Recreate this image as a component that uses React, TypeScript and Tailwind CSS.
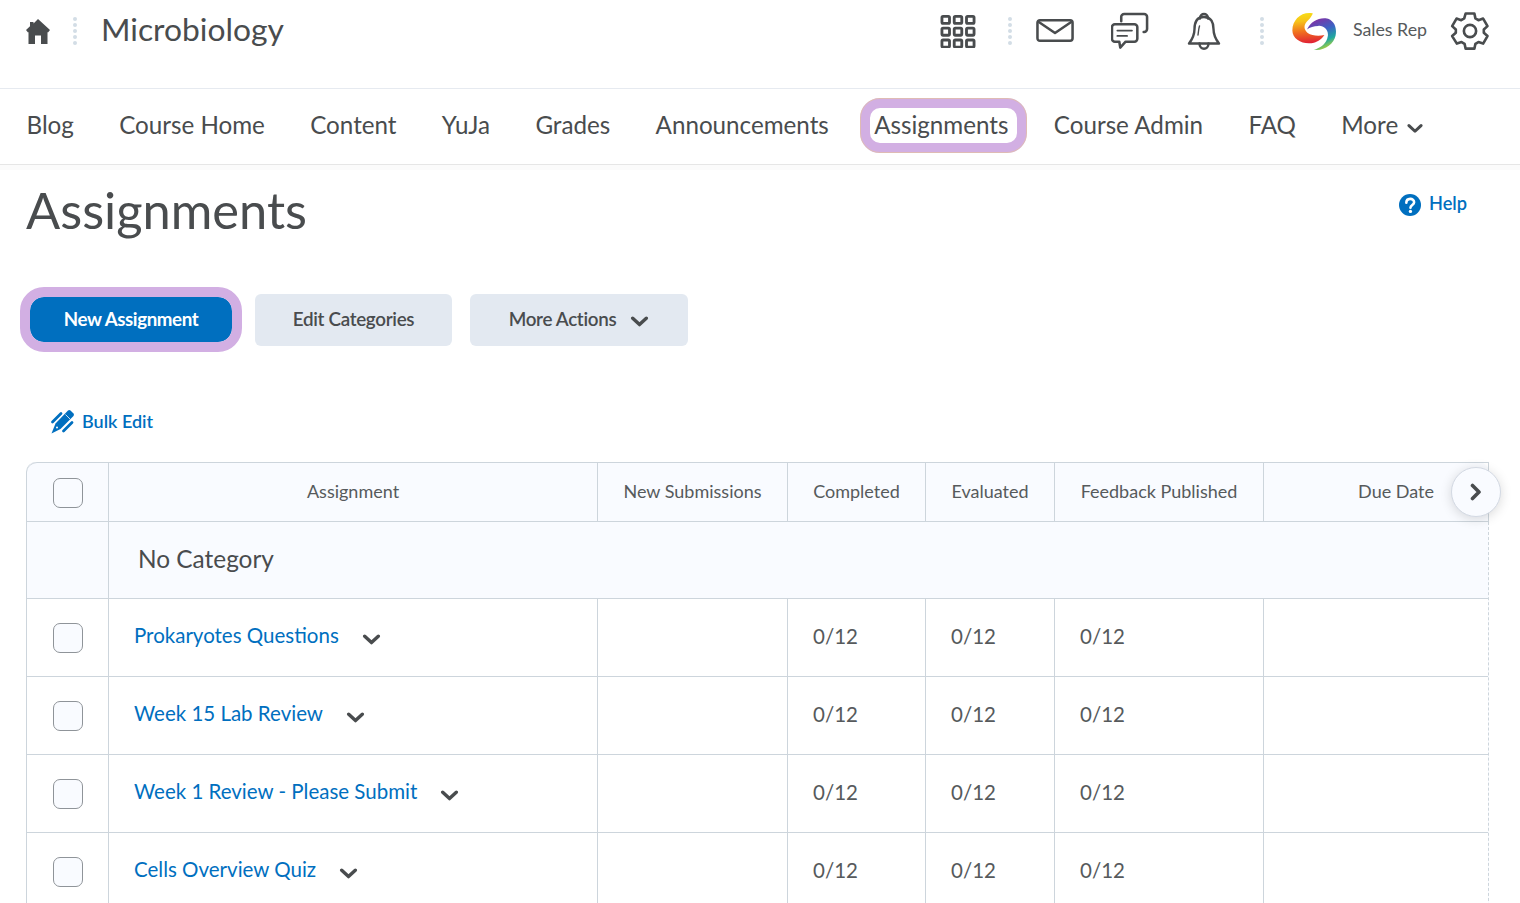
import React from "react";

const ink = "#494c4e";

function Dots() {
  return (
    <svg width="6" height="30" viewBox="0 0 6 30" className="shrink-0">
      {[3, 9, 15, 21, 27].map((y) => (
        <circle key={y} cx="3" cy={y} r="2" fill="#d3dde6" />
      ))}
    </svg>
  );
}

function Chevron({ className = "" }: { className?: string }) {
  return (
    <svg width="19" height="11" viewBox="0 0 18 11" className={className}>
      <path d="M2.2 2.200 9 8.600l6.800-6.400" fill="none" stroke={ink} strokeWidth="3.400" strokeLinecap="round" strokeLinejoin="round" />
    </svg>
  );
}

function Logo() {
  return (
    <svg width="46" height="39" viewBox="25 22 132 112">
      <defs>
        <linearGradient id="a" x1="0.45" y1="0" x2="0.55" y2="1">
          <stop offset="0" stopColor="#f7dc17" />
          <stop offset="0.25" stopColor="#f7c31a" />
          <stop offset="0.6" stopColor="#f0701f" />
          <stop offset="1" stopColor="#e01f35" />
        </linearGradient>
        <linearGradient id="b" x1="0.2" y1="0" x2="0.6" y2="1">
          <stop offset="0" stopColor="#8a2aa0" />
          <stop offset="0.45" stopColor="#3c62c4" />
          <stop offset="0.75" stopColor="#1fa8a0" />
          <stop offset="1" stopColor="#b4d335" />
        </linearGradient>
      </defs>
      <path d="M85 26C52 20 26 44 26 75c0 27 33 42 62 35 12-3 24-12 30-22-18 4-36 2-48-6-13-10-12-25 2-37 6-5 10-14 13-19z" fill="url(#a)" />
      <path d="M68 72c10-22 32-34 54-32 23 4 33 25 28 50-5 25-35 45-62 40 20-5 37-18 40-40 2-18-13-30-28-28-12 0-24 4-32 10z" fill="url(#b)" />
    </svg>
  );
}

const cols = "grid grid-cols-[82px_489px_190px_138px_129px_209px_minmax(0,1fr)]";
const cell = "border-r border-[#cdd5dc] border-b h-full flex items-center";

function Check() {
  return <span className="block w-[30px] h-[30px] rounded-[7px] border border-[#8f9499] bg-[#f9fbff]" />;
}

function Count() {
  return <div className={`${cell} pl-[25px] text-[20.500px]`}><span className="relative top-[-1px]">0/12</span></div>;
}

function Row({ name }: { name: string }) {
  return (
    <div className={`${cols} h-[78px]`}>
      <div className={`${cell} justify-center`}><Check /></div>
      <div className={`${cell} pl-[25px] text-[#006fbf] text-[20.500px]`}>
        <span className="relative top-[-2px]">{name}</span>
        <Chevron className="relative top-[2px] ml-[23px]" />
      </div>
      <div className={cell} />
      <Count />
      <Count />
      <Count />
      <div className="border-b border-[#cdd5dc] h-full" />
    </div>
  );
}

function Head({ children }: { children: React.ReactNode }) {
  return <div className={`${cell} justify-center`}><span className="relative top-[-1px]">{children}</span></div>;
}

export default function App() {
  const rows = ["Prokaryotes Questions", "Week 15 Lab Review", "Week 1 Review - Please Submit", "Cells Overview Quiz"];
  return (
    <div className="h-[903px] overflow-hidden bg-white text-[#494c4e] font-['Lato',sans-serif]">
      <header className="h-[89px] border-b border-[#e6eaf0] flex items-start">
        <div className="flex items-center h-[62px] pl-[26px]">
          <svg width="24" height="25" viewBox="0 0 24 25">
            <path d="M12 0 24 11l-2 2.500-.5-.5v12H15v-8.500H9V25H2.500V13l-.5.500L0 11l4-3.700V3h3.500v1.500z" fill={ink} />
          </svg>
          <span className="ml-[22px]"><Dots /></span>
          <span className="ml-[23px] text-[31.800px] leading-none relative top-[-1px]">Microbiology</span>
        </div>
        <div className="ml-auto flex items-center h-[62px] pr-[28px]">
          <svg width="36" height="34" viewBox="0 0 38 36" fill="none" stroke={ink} strokeWidth="3">
            {[0, 1, 2].flatMap((r) =>
              [0, 1, 2].map((c) => (
                <rect key={`${r}${c}`} x={2 + c * 13} y={2.500 + r * 12.500} width="8" height="7.500" rx="1.200" />
              ))
            )}
          </svg>
          <span className="ml-[31px]"><Dots /></span>
          <svg className="ml-[23px]" width="39" height="26" viewBox="0 0 40 26" fill="none" stroke={ink} strokeWidth="2.600" strokeLinejoin="round">
            <rect x="1.500" y="2" width="36" height="21" rx="2.500" />
            <path d="M2.500 3.500 19.500 15 36.500 3.500" />
          </svg>
          <svg className="ml-[36px]" width="39" height="38" viewBox="0 0 40 38" fill="none" stroke={ink} strokeWidth="2.600" strokeLinejoin="round" strokeLinecap="round">
            <path d="M10.500 9V4.500a3 3 0 0 1 3-3h20.500a3 3 0 0 1 3 3V17a3 3 0 0 1-3 3h-.5" />
            <path d="M4 12h20a3 3 0 0 1 3 3v12a3 3 0 0 1-3 3H15l-5.500 6-1-6H4a3 3 0 0 1-3-3V15a3 3 0 0 1 3-3z" />
            <path d="M6.500 18.500h15M6.500 24h10" strokeWidth="1.800" />
          </svg>
          <svg className="ml-[37px]" width="34" height="38" viewBox="0 0 34 38" fill="none" stroke={ink} strokeWidth="2.400" strokeLinejoin="round" strokeLinecap="round">
            <path d="M13 6.500c0-6 8-6 8 0" />
            <path d="M17 5C9.500 5 7.500 11 7.500 17c0 6-2 10-5.500 14.500h30C28.500 27 26.500 23 26.500 17 26.500 11 24.500 5 17 5z" />
            <path d="M12.500 31.500c0 7 9 7 9 0" />
            <path d="M12.500 14c-1 3-1 6-1.500 9" strokeWidth="1.400" />
          </svg>
          <span className="ml-[38px]"><Dots /></span>
          <span className="ml-[27px] flex"><Logo /></span>
          <span className="ml-[15px] text-[17.800px] text-[#565a5c] relative top-[-2px]">Sales Rep</span>
          <svg className="ml-[21px]" width="44" height="42" viewBox="0 0 24 24" fill="none" stroke={ink} strokeWidth="1.500" strokeLinejoin="round">
            <path d="M9.500 2h5l.6 2.800 1.700 1 2.700-.9 2.500 4.300-2.100 1.900v1.900l2.100 1.900-2.500 4.300-2.700-.9-1.700 1-.6 2.800h-5l-.6-2.800-1.700-1-2.700.9L1.800 14.900l2.100-1.900v-1.900L1.800 9.200l2.500-4.300 2.700.9 1.700-1z" />
            <circle cx="12" cy="12" r="3.500" />
          </svg>
        </div>
      </header>

      <nav className="h-[76px] border-b border-[#e6e6e6] flex items-center pl-[26.500px] pb-[2px] gap-[45.300px] text-[24.200px]">
        <span>Blog</span>
        <span>Course Home</span>
        <span>Content</span>
        <span>YuJa</span>
        <span>Grades</span>
        <span>Announcements</span>
        <span className="relative">
          Assignments
          <span className="absolute -left-[14px] -right-[19px] top-[-9px] bottom-[-9px] rounded-[20px] border-[10px] border-[#d2afe3] outline outline-1 outline-[#f3cd6e]/40 -outline-offset-1" />
        </span>
        <span>Course Admin</span>
        <span>FAQ</span>
        <span className="flex items-center gap-[9px]">More <Chevron className="relative top-[3px] w-[16px]" /></span>
      </nav>

      <div className="h-[5px] bg-[#fbfbfb]" />

      <div className="flex items-start justify-between pl-[26px] pr-[53px]">
        <h1 className="text-[50.600px] leading-[64px] mt-[8px]">Assignments</h1>
        <div className="flex items-center gap-[8px] mt-[20px] text-[#006fbf] text-[18.200px] font-semibold">
          <svg width="22" height="22" viewBox="0 0 24 24" className="relative top-[1px]">
            <circle cx="12" cy="12" r="12" fill="#006fbf" />
            <path d="M8 9.500c0-5.500 8.500-5.500 8.500-.5 0 3-4 3-4 6" fill="none" stroke="#fff" strokeWidth="2.800" strokeLinecap="round" />
            <circle cx="12.500" cy="19" r="1.800" fill="#fff" />
          </svg>
          Help
        </div>
      </div>

      <div className="mt-[52px] pl-[30px] flex items-start">
        <button className="mt-[3px] w-[202px] h-[45px] rounded-[14px] bg-[#006fbf] text-white text-[18.700px] font-bold tracking-[-0.4px] outline outline-[10px] outline-[#d2afe3]">
          New Assignment
        </button>
        <button className="ml-[23px] w-[197px] h-[52px] pb-[2px] rounded-[6px] bg-[#e3e9f1] text-[18.800px] font-semibold tracking-[-0.3px]">
          Edit Categories
        </button>
        <button className="ml-[18px] w-[218px] h-[52px] pb-[2px] rounded-[6px] bg-[#e3e9f1] text-[18.800px] font-semibold tracking-[-0.3px] flex items-center justify-center gap-[14px]">
          More Actions
          <Chevron className="relative top-[2px]" />
        </button>
      </div>

      <div className="mt-[62px] ml-[50px] flex items-center gap-[7px] text-[#006fbf] text-[18px] font-semibold h-[26px]">
        <svg width="25" height="25" viewBox="0 0 25 25">
          <path d="M18 1.500a2 2 0 0 1 2.500 0l3 3a2 2 0 0 1 0 2.500L10.500 20 1.500 24.500 5.500 14.500z" fill="#006fbf" />
          <path d="M2.500 13 11 4.500M13.500 22 22 13.500" stroke="#006fbf" strokeWidth="2.800" strokeLinecap="round" />
          <path d="M15.500 5.500l4.500 4.500" stroke="#fff" strokeWidth="0.800" />
          <circle cx="7" cy="18.500" r="1" fill="#fff" />
        </svg>
        Bulk Edit
      </div>

      <div className="relative mt-[28px] ml-[26px] w-[1463px] text-[#565a5c] bg-[#f9fbff] rounded-t-[10px] border-l border-[#cdd5dc]">
        <div className={`${cols} h-[60px] border-t border-[#cdd5dc] rounded-tl-[10px] text-[18px]`}>
          <div className={`${cell} justify-center`}><span className="relative top-[1px]"><Check /></span></div>
          <Head>Assignment</Head>
          <Head>New Submissions</Head>
          <Head>Completed</Head>
          <Head>Evaluated</Head>
          <Head>Feedback Published</Head>
          <div className={`${cell} justify-end pr-[54px]`}><span className="relative top-[-1px]">Due Date</span></div>
        </div>
        <div className="border-r border-dashed border-[#cdd5dc]">
          <div className="grid grid-cols-[82px_1fr] h-[77px] border-b border-solid border-[#cdd5dc]">
            <div className="border-r border-solid border-[#cdd5dc]" />
            <div className="pl-[29px] flex items-center text-[24.400px] text-[#494c4e]"><span className="relative top-[-1px]">No Category</span></div>
          </div>
          <div className="bg-white">
            {rows.map((n) => (
              <Row key={n} name={n} />
            ))}
          </div>
        </div>
        <span className="absolute left-[1424px] top-[5px] w-[50px] h-[50px] rounded-full bg-[#f9fbff] border border-[#d3d9e3] shadow-[0_2px_12px_rgba(0,0,0,0.15)] flex items-center justify-center">
          <svg width="12" height="18" viewBox="0 0 12 18">
            <path d="M2.500 2.500 9 9l-6.500 6.500" fill="none" stroke={ink} strokeWidth="3.600" strokeLinecap="round" strokeLinejoin="round" />
          </svg>
        </span>
      </div>
    </div>
  );
}
